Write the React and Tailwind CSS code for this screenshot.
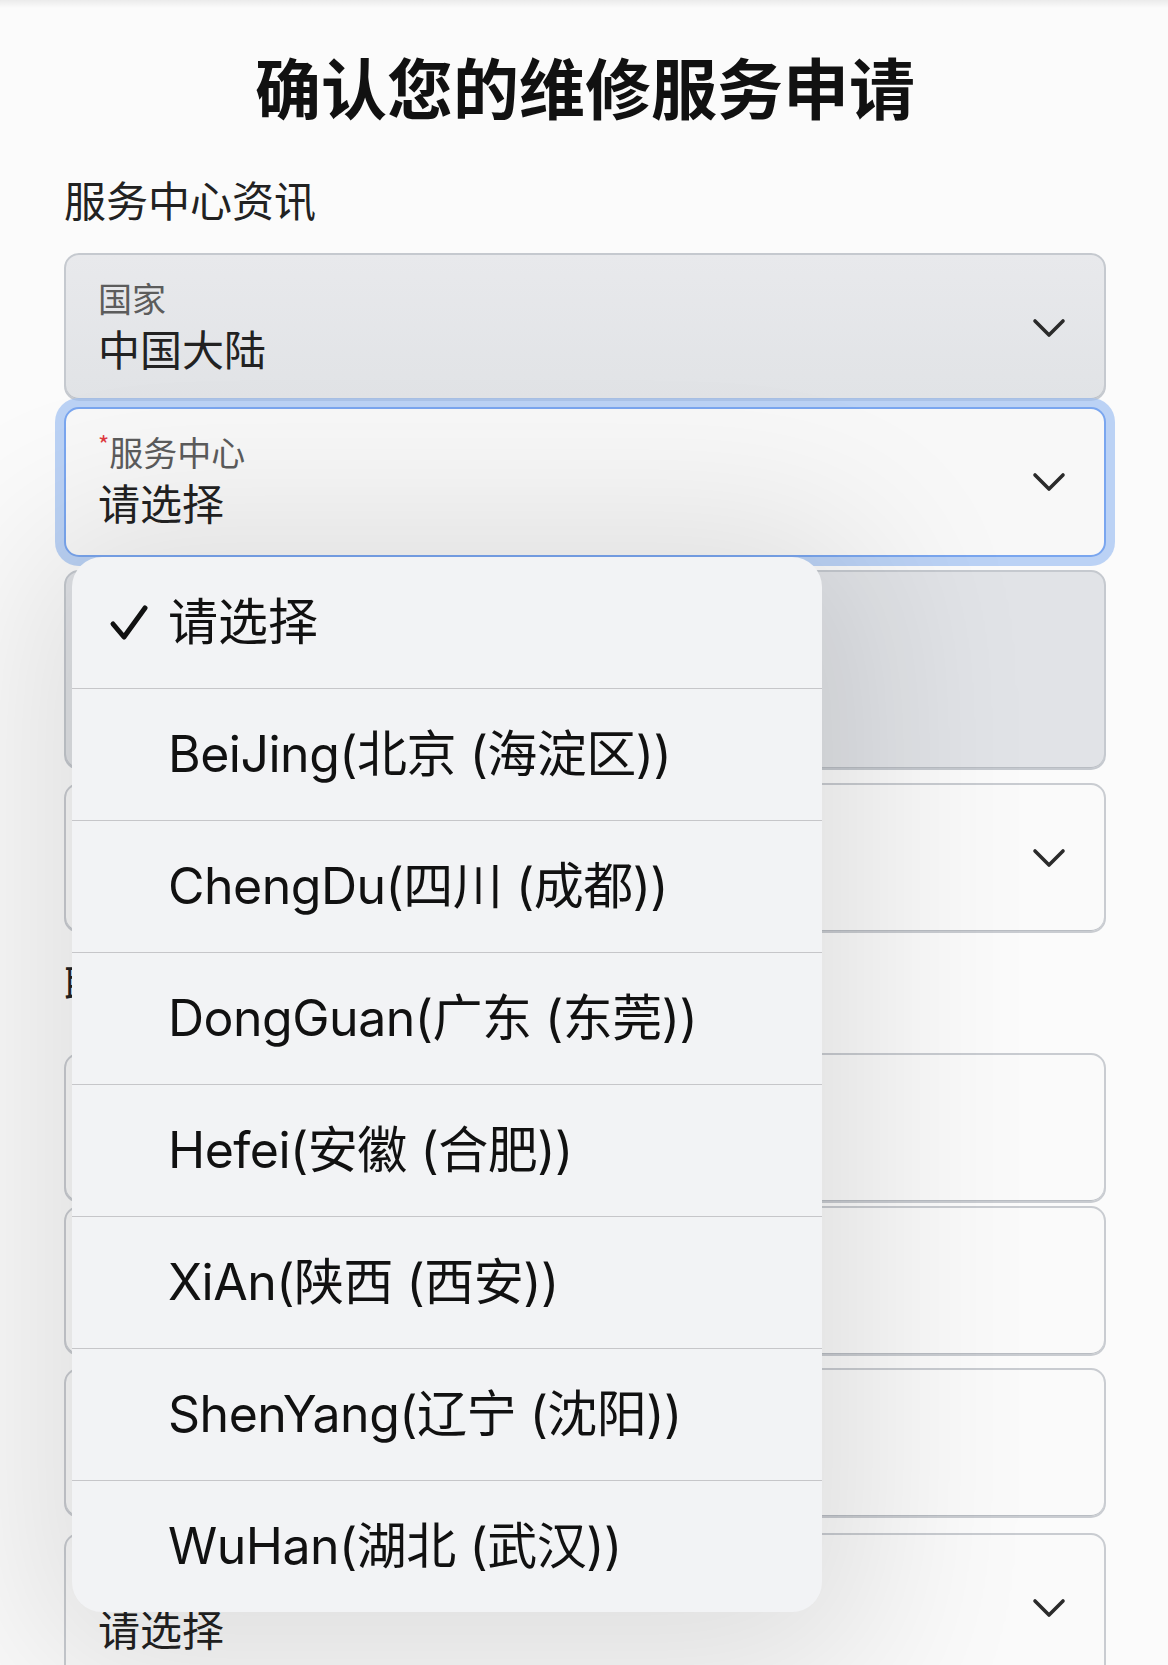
const CENTERS = [
  'BeiJing(北京 (海淀区))',
  'ChengDu(四川 (成都))',
  'DongGuan(广东 (东莞))',
  'Hefei(安徽 (合肥))',
  'XiAn(陕西 (西安))',
  'ShenYang(辽宁 (沈阳))',
  'WuHan(湖北 (武汉))',
]

const CJK = { fontFamily: '"Noto Sans CJK SC", "Noto Sans", sans-serif' }
const MENU_FONT = { fontFamily: 'Inter, "Noto Sans CJK SC", sans-serif' }

const VARIANTS = {
  gray: 'bg-gradient-to-b from-[#e8e9ec] to-[#e1e3e6] border-[#c5c9cf] shadow-[inset_0_-1px_0_#b9bdc3]',
  white: 'bg-[#fafafa] border-[#c9ccd1] shadow-[inset_0_-1px_0_#b9bdc3]',
  focus: 'relative z-10 bg-[#f8f8f8] border-[#7aa6ef] shadow-[0_0_0_9px_rgba(160,192,242,0.7)]',
  disabled: 'bg-[#e1e3e7] border-[#c5c9cf] shadow-[inset_0_-1px_0_#b9bdc3]',
}

function Chevron() {
  return (
    <svg width="34" height="20" viewBox="0 0 34 20" className="mt-[63px] shrink-0">
      <path d="M3 3 L17 17 L31 3" fill="none" stroke="#2b2b2b" strokeWidth="3.6" strokeLinecap="round" strokeLinejoin="round" />
    </svg>
  )
}

// label / value are only given where the picture shows them; the rest sits under the open menu
function Field({ label, required, value, chevron, variant = 'white', className = '' }) {
  return (
    <div className={`flex items-start justify-between rounded-[15px] border-2 pl-[32px] pr-[38px] ${VARIANTS[variant]} ${className}`}>
      <div className="pt-[23px]">
        <div className="h-[40px] text-[34px] leading-[40px] text-[#5c5c5c]">
          {required && <span className="text-[24px] leading-none align-top text-[#e0383e]">*</span>}
          {label}
        </div>
        {value && <div className="mt-[5px] text-[42px] leading-[50px] text-[#222]">{value}</div>}
      </div>
      {chevron && <Chevron />}
    </div>
  )
}

function CenterMenu() {
  return (
    <div
      className="absolute left-[72px] top-[557px] z-20 w-[750px] overflow-hidden rounded-[30px] bg-[#f2f3f5] shadow-[0_20px_170px_50px_rgba(0,0,0,0.11)]"
      style={MENU_FONT}
    >
      <div className="flex h-[131px] items-center pl-[37px] text-[50px] text-[#111]">
        <svg width="40" height="40" viewBox="0 0 40 40" className="mr-[19px] shrink-0">
          <path d="M4 21 L15 34 L36 5" fill="none" stroke="#111" strokeWidth="5" strokeLinecap="round" strokeLinejoin="round" />
        </svg>
        请选择
      </div>
      {CENTERS.map(c => (
        <div key={c} className="flex h-[132px] items-center border-t-[1.5px] border-[#c6c6c9] pl-[96px] text-[50px] tracking-[-0.5px] text-[#111]">
          {c}
        </div>
      ))}
    </div>
  )
}

export default function App() {
  return (
    <div className="relative min-h-[1665px] overflow-hidden bg-[#fbfbfb]" style={CJK}>
      <div className="h-[8px] bg-gradient-to-b from-[#ebebeb] to-[#fbfbfb]" />

      <div className="pl-[64px] pr-[62px]">
        <h1 className="mt-[38px] text-center text-[66px] font-bold leading-[78px] text-[#111]">
          确认您的维修服务申请
        </h1>

        <h2 className="mt-[50px] text-[42px] leading-[50px] text-[#222]">服务中心资讯</h2>

        <Field className="mt-[29px] h-[148px]" variant="gray" label="国家" value="中国大陆" chevron />
        <Field className="mt-[6px] h-[150px]" variant="focus" label="服务中心" required value="请选择" chevron />
        <Field className="mt-[13px] h-[200px]" variant="disabled" />
        <Field className="mt-[13px] h-[150px]" chevron />

        <h2 className="mt-[25px] text-[42px] leading-[50px] text-[#222]">联系人资讯</h2>

        <Field className="mt-[45px] h-[150px]" />
        <Field className="mt-[3px] h-[150px]" />
        <Field className="mt-[12px] h-[150px]" />
        <Field className="mt-[15px] h-[150px]" value="请选择" chevron />
      </div>

      <CenterMenu />
    </div>
  )
}
